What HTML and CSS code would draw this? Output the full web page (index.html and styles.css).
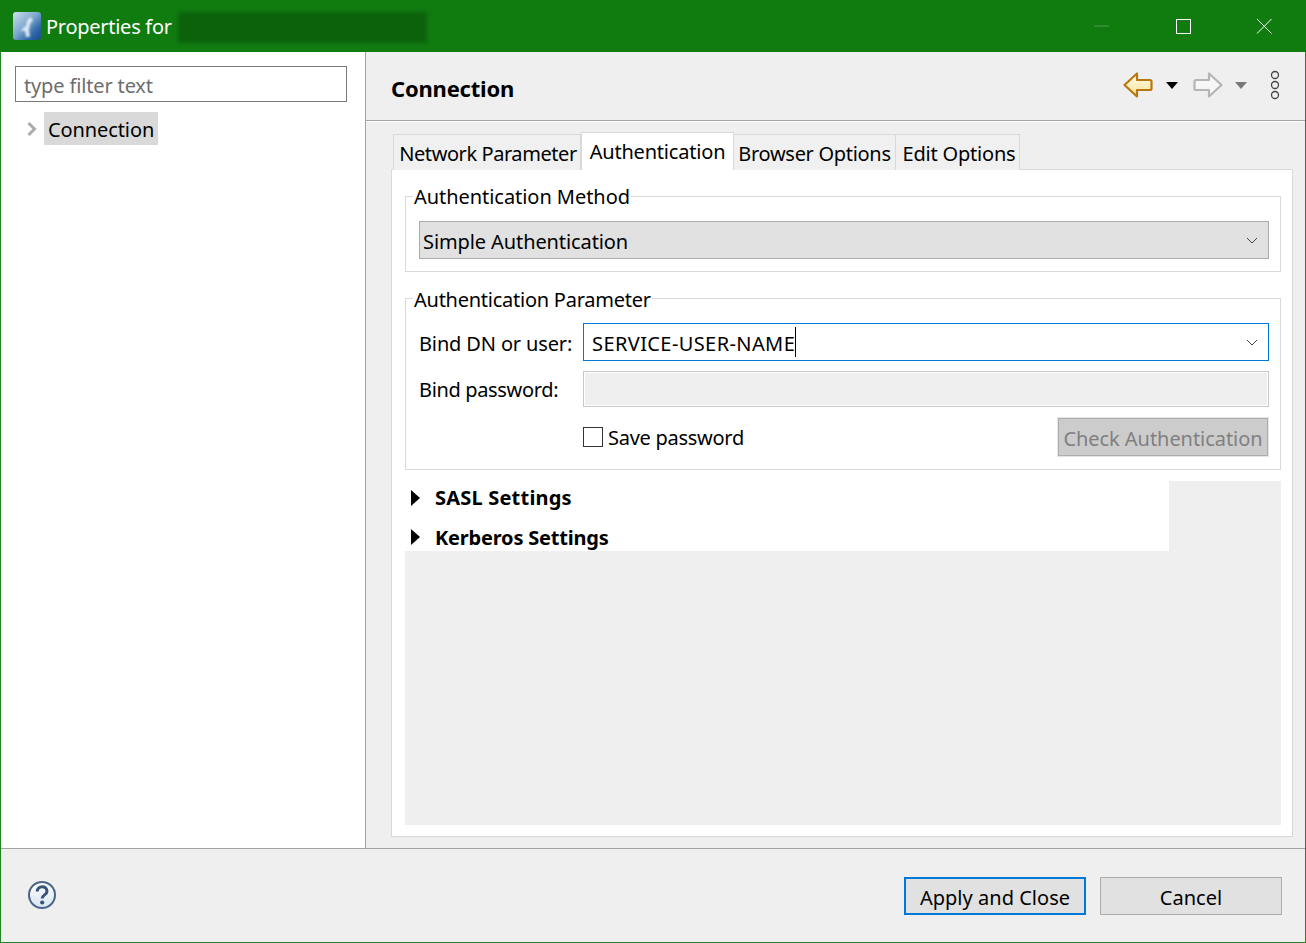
FILE: index.html
```html
<!DOCTYPE html>
<html lang="en">
<head>
<meta charset="utf-8">
<title>Properties</title>
<link rel="stylesheet" href="styles.css">
</head>
<body>
<div class="window">
  <header class="titlebar">
    <svg class="app-icon" width="28" height="28" viewBox="0 0 28 28">
      <defs>
        <linearGradient id="appg" x1="0" y1="0" x2="1" y2="1">
          <stop offset="0" stop-color="#cfe0ee"/><stop offset=".45" stop-color="#7fa9cf"/><stop offset=".75" stop-color="#2c67a6"/><stop offset="1" stop-color="#1b4c88"/>
        </linearGradient>
        <filter id="soft" x="-30%" y="-30%" width="160%" height="160%"><feGaussianBlur stdDeviation="1"/></filter>
      </defs>
      <rect width="28" height="28" rx="3" fill="url(#appg)"/>
      <path d="M17 5l3 3-3 4-1 6 1 7h-4l-1-6-4 0 3-4 2-1 1-5z" fill="#f2f6fa" opacity=".85" filter="url(#soft)"/>
    </svg>
    <span class="title-text">Properties for</span>
    <span class="redacted"></span>
    <div class="win-controls">
      <svg width="16" height="16" viewBox="0 0 16 16"><path d="M0 8h15" stroke="#4f9a4f" stroke-width="1" fill="none"/></svg>
      <svg width="16" height="16" viewBox="0 0 16 16"><rect x="1.5" y="1.5" width="14" height="14" stroke="#fff" stroke-width="1" fill="none"/></svg>
      <svg width="16" height="16" viewBox="0 0 16 16"><path d="M1 1l14.500 14.500M15.500 1L1 15.500" stroke="#fff" stroke-width="1" fill="none"/></svg>
    </div>
  </header>

  <div class="main">
    <aside class="sidebar">
      <input class="filter" type="text" placeholder="type filter text">
      <div class="tree-row">
        <svg class="tree-arrow" width="12" height="16" viewBox="0 0 12 16"><path d="M2.500 2l6 6-6 6" stroke="#ababab" stroke-width="3" fill="none"/></svg>
        <span class="tree-label">Connection</span>
      </div>
    </aside>

    <section class="content">
      <div class="page-head">
        <h1 class="page-title">Connection</h1>
        <div class="nav-tools">
          <svg class="nav-arrow" width="30" height="26" viewBox="0 0 30 26">
            <defs><linearGradient id="bk" x1="0" y1="0" x2="0" y2="1"><stop offset="0" stop-color="#fffef4"/><stop offset="1" stop-color="#fde08c"/></linearGradient></defs>
            <path d="M1.500 13L14 1.500V8h13a1.500 1.500 0 0 1 1.500 1.500v7a1.500 1.500 0 0 1-1.500 1.500H14v6.500z" fill="url(#bk)" stroke="#b8770f" stroke-width="2.200" stroke-linejoin="round"/>
          </svg>
          <svg class="drop" width="12" height="7" viewBox="0 0 12 7"><path d="M0 0h12L6 7z" fill="#000"/></svg>
          <svg class="nav-arrow fwd" width="30" height="26" viewBox="0 0 30 26">
            <path d="M28.500 13L16 1.500V8H3a1.500 1.500 0 0 0-1.500 1.500v7A1.500 1.500 0 0 0 3 18h13v6.500z" fill="#f7f7f7" stroke="#b5b5b5" stroke-width="2.200" stroke-linejoin="round"/>
          </svg>
          <svg class="drop drop-off" width="12" height="7" viewBox="0 0 12 7"><path d="M0 0h12L6 7z" fill="#787878"/></svg>
          <svg class="dots" width="10" height="30" viewBox="0 0 10 30">
            <circle cx="5" cy="5" r="3.500" fill="none" stroke="#444" stroke-width="1.300"/>
            <circle cx="5" cy="15" r="3.500" fill="none" stroke="#444" stroke-width="1.300"/>
            <circle cx="5" cy="25" r="3.500" fill="none" stroke="#444" stroke-width="1.300"/>
          </svg>
        </div>
      </div>

      <div class="tabs">
        <div class="tab tab-first">Network Parameter</div>
        <div class="tab tab-active">Authentication</div>
        <div class="tab tab-browser">Browser Options</div>
        <div class="tab tab-edit">Edit Options</div>
      </div>

      <div class="tab-panel">
        <fieldset class="group group-method">
          <legend>Authentication Method</legend>
          <div class="combo combo-readonly">
            <span>Simple Authentication</span>
            <svg class="chev" width="12" height="7" viewBox="0 0 12 7"><path d="M1 1l5 5 5-5" stroke="#444" stroke-width="1" fill="none"/></svg>
          </div>
        </fieldset>

        <fieldset class="group group-param">
          <legend>Authentication Parameter</legend>
          <div class="form-row row-user">
            <label class="field-label">Bind DN or user:</label>
            <div class="combo combo-focus">
              <span class="user-value">SERVICE-USER-NAME</span><i class="caret"></i>
              <svg class="chev" width="12" height="7" viewBox="0 0 12 7"><path d="M1 1l5 5 5-5" stroke="#444" stroke-width="1" fill="none"/></svg>
            </div>
          </div>
          <div class="form-row row-pass">
            <label class="field-label">Bind password:</label>
            <div class="pass-field"></div>
          </div>
          <div class="form-row row-save">
            <span class="check-box"></span>
            <span class="check-label">Save password</span>
            <button class="btn-check" type="button" disabled>Check Authentication</button>
          </div>
        </fieldset>

        <div class="sections">
          <div class="sections-white">
            <div class="section-row row-sasl">
              <svg width="9" height="16" viewBox="0 0 9 16"><path d="M0 0l9 8-9 8z" fill="#000"/></svg>
              <span>SASL Settings</span>
            </div>
            <div class="section-row row-kerb">
              <svg width="9" height="16" viewBox="0 0 9 16"><path d="M0 0l9 8-9 8z" fill="#000"/></svg>
              <span>Kerberos Settings</span>
            </div>
          </div>
        </div>
      </div>
    </section>
  </div>

  <footer class="footer">
    <svg class="help" width="30" height="30" viewBox="0 0 30 30">
      <defs><linearGradient id="hg" x1="0" y1="0" x2="0" y2="1"><stop offset="0" stop-color="#fbfdff"/><stop offset="1" stop-color="#d8e5f0"/></linearGradient></defs>
      <circle cx="15" cy="15" r="13" fill="url(#hg)" stroke="#4a6488" stroke-width="2"/>
      <path d="M10.200 11.500c.3-6.300 9.800-6.300 9.800-.2 0 3.800-4.800 3.400-4.800 7.200" fill="none" stroke="#3a5379" stroke-width="3"/>
      <circle cx="15.200" cy="22.500" r="2.100" fill="#3a5379"/>
    </svg>
    <div class="footer-buttons">
      <button class="btn btn-primary" type="button">Apply and Close</button>
      <button class="btn" type="button">Cancel</button>
    </div>
  </footer>
</div>
</body>
</html>
```
FILE: styles.css
```css
* { box-sizing: border-box; }
html, body { margin: 0; height: 100%; }
body {
  font-family: "Noto Sans", "Open Sans", sans-serif;
  font-size: 20px;
  letter-spacing: -0.2px;
  color: #000;
  overflow: hidden;
}
.window {
  width: 1306px;
  height: 943px;
  display: flex;
  flex-direction: column;
  border: 1px solid #218521;
  border-top: 0;
  background: #efefef;
}
.titlebar {
  height: 52px;
  margin: 0 -1px;
  flex: none;
  background: #107c10;
  color: #fff;
  display: flex;
  align-items: center;
  padding-left: 13px;
}
.app-icon { flex: none; }
.title-text { margin-left: 5px; letter-spacing: -0.27px; }
.redacted {
  width: 249px;
  height: 31px;
  margin: 3px 0 0 6px;
  background: #0b620b;
  filter: blur(2px);
}
.win-controls {
  margin-left: auto;
  display: flex;
  gap: 65px;
  padding-right: 34px;
  align-items: center;
}
.main { flex: 1; display: flex; min-height: 0; border-bottom: 1px solid #a3a3a3; }
.sidebar {
  width: 364px;
  flex: none;
  background: #fff;
  padding: 14px 18px 0 14px;
}
.filter {
  display: block;
  width: 332px;
  height: 36px;
  border: 1px solid #7a7a7a;
  padding: 2px 8px 0;
  font: inherit;
  letter-spacing: -0.15px;
  outline: none;
}
.filter::placeholder { color: #6d6d6d; opacity: 1; }
.tree-row { display: flex; align-items: center; margin-top: 10px; padding-left: 11px; }
.tree-arrow { flex: none; }
.tree-label {
  margin-left: 6px;
  height: 33px;
  line-height: 35px;
  padding: 0 4px;
  letter-spacing: -0.1px;
  background: #d9d9d9;
}
.content {
  flex: 1;
  min-width: 0;
  border-left: 1px solid #a3a3a3;
  display: flex;
  flex-direction: column;
}
.page-head {
  height: 69px;
  flex: none;
  border-bottom: 1px solid #a3a3a3;
  box-shadow: 0 1px 0 #fff;
  display: flex;
  align-items: center;
  padding: 4px 25px 0 25px;
}
.page-title { margin: 0; font-size: 22px; font-weight: 700; letter-spacing: -0.2px; }
.nav-tools { margin-left: auto; margin-bottom: 6px; display: flex; align-items: center; }
.drop { margin-left: 13px; }
.fwd { margin-left: 15px; }
.drop-off { margin-left: 12px; }
.dots { margin-left: 23px; }
.tabs {
  flex: none;
  display: flex;
  align-items: flex-end;
  height: 49px;
  margin-bottom: -1px;
  padding-left: 27px;
  position: relative;
}
.tab {
  height: 36px;
  line-height: 38px;
  border: 1px solid #d9d9d9;
  border-bottom: 0;
  margin-left: -1px;
  background: #f0f0f0;
  text-align: center;
  white-space: nowrap;
}
.tab-first { width: 188px; margin-left: 0; padding-left: 2px; letter-spacing: -0.43px; }
.tab-active { width: 153px; height: 38px; line-height: 38px; background: #fff; margin-left: 0; }
.tab-browser { width: 163px; letter-spacing: -0.3px; }
.tab-edit { width: 125px; padding-left: 3px; }
.tab-panel {
  width: 902px;
  height: 668px;
  margin-left: 25px;
  background: #fff;
  border: 1px solid #d9d9d9;
  padding: 0 11px 0 13px;
}
.group {
  margin: 0;
  padding: 0;
  min-width: 0;
  border: 1px solid #d9d9d9;
}
.group legend {
  margin-left: -6px;
  padding: 0 1px;
  height: 26px;
  line-height: 28px;
}
.group-method legend { letter-spacing: -0.05px; }
.group-param legend { line-height: 30px; letter-spacing: -0.25px; }
.group-method { margin-top: 13px; height: 89px; padding: 12px 11px 0 13px; }
.group-param { margin-top: 13px; height: 185px; padding: 12px 11px 0 13px; }
.combo {
  height: 38px;
  display: flex;
  align-items: center;
  border: 1px solid #ababab;
  padding: 2px 10px 0 3px;
  letter-spacing: -0.1px;
}
.combo .chev { margin-top: -2px; }
.combo-readonly { background: #e1e1e1; }
.chev { margin-left: auto; flex: none; }
.form-row { display: flex; align-items: center; }
.field-label { width: 164px; flex: none; }
.row-user .field-label { padding-top: 2px; letter-spacing: -0.14px; }
.row-pass .field-label { letter-spacing: -0.35px; }
.row-user .combo { flex: 1; border: 1px solid #0078d7; padding-left: 8px; }
.user-value { letter-spacing: 0.4px; }
.caret { width: 1px; height: 30px; margin-top: -2px; background: #000; }
.row-pass { margin-top: 10px; }
.pass-field {
  flex: 1;
  height: 36px;
  background: #efefef;
  border: 1px solid #c8c8c8;
  box-shadow: inset 0 0 0 1px #fff;
}
.row-save { margin-top: 11px; padding-left: 164px; }
.check-box {
  width: 20px;
  height: 20px;
  border: 1px solid #333;
  background: #fff;
  flex: none;
}
.check-label { margin-left: 5px; letter-spacing: -0.27px; }
.btn-check {
  margin: 0 1px 0 auto;
  width: 210px;
  height: 38px;
  padding: 2px 0 0;
  font: inherit;
  letter-spacing: -0.05px;
  color: #808080;
  background: #cccccc;
  border: 1px solid #adadad;
  outline: 1px solid #e6e6e6;
}
.sections {
  margin-top: 11px;
  height: 344px;
  background: #efefef;
}
.sections-white {
  width: 764px;
  height: 70px;
  background: #fff;
  font-weight: 700;
}
.section-row { display: flex; align-items: center; padding-left: 6px; }
.section-row span { margin-left: 15px; }
.row-sasl span { letter-spacing: 0.2px; }
.row-sasl { height: 33px; }
.row-kerb { height: 37px; padding-top: 9px; }
.footer {
  height: 93px;
  flex: none;
  display: flex;
  align-items: center;
  padding: 0 23px 2px 26px;
}
.help { flex: none; }
.footer-buttons { margin-left: auto; display: flex; gap: 14px; padding-top: 3px; }
.btn {
  width: 182px;
  height: 38px;
  padding: 2px 0 0;
  font: inherit;
  letter-spacing: 0.03px;
  color: #000;
  background: #e1e1e1;
  border: 1px solid #adadad;
}
.btn-primary { border: 2px solid #0078d7; }
```
